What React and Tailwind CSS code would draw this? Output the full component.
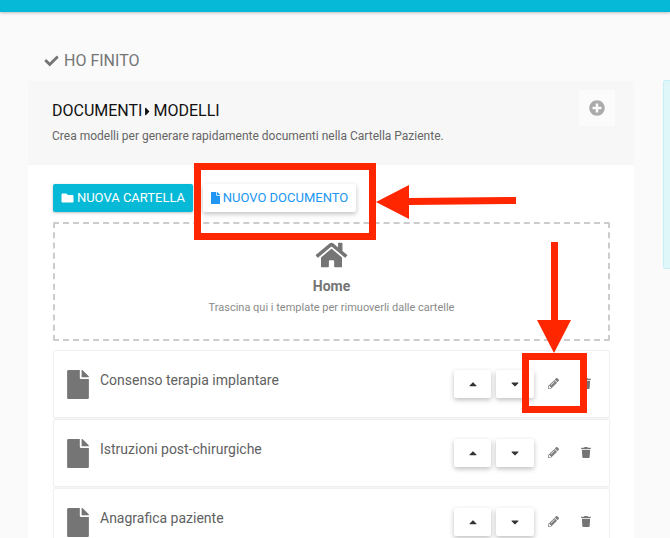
import React from "react";
import { FaCheck, FaFolder, FaFile, FaHome, FaPlusCircle, FaCaretUp, FaCaretDown, FaPencilAlt, FaTrash, FaCaretRight } from "react-icons/fa";

function RedBox({ className }) {
  return <div className={"absolute border-[7px] border-[#ff2600] " + className} />;
}

function Row({ title }) {
  return (
    <div className="h-[68px] shrink-0 flex items-start border border-[#f0f0f0] rounded-[2px] bg-white shadow-[0_1px_1px_rgba(0,0,0,0.05)] pl-[13px]">
      <FaFile className="mt-[19px] w-[22px] h-[29px] text-[#757575]" />
      <span className="ml-[11px] mt-[20px] text-[14px] leading-[18px] text-[#616161]">{title}</span>
      <div className="ml-auto flex items-start mt-[19px]">
        <button className="w-[37px] h-[28px] bg-white rounded-[2px] flex items-center justify-center shadow-[0_2px_5px_rgba(0,0,0,0.25)] text-[#333]">
          <FaCaretUp className="w-[12px] h-[12px]" />
        </button>
        <button className="ml-[5px] w-[38px] h-[28px] bg-white rounded-[2px] flex items-center justify-center shadow-[0_2px_5px_rgba(0,0,0,0.25)] text-[#333]">
          <FaCaretDown className="w-[12px] h-[12px]" />
        </button>
        <FaPencilAlt className="ml-[14px] mt-[8px] w-[11px] h-[11px] text-[#808080]" />
        <FaTrash className="ml-[22px] mt-[8px] w-[10px] h-[11px] text-[#757575]" />
        <span className="w-[18px]" />
      </div>
    </div>
  );
}

export default function App() {
  return (
    <div className="relative w-[670px] h-[538px] overflow-hidden bg-[#fafafa] font-['Roboto',sans-serif]">
      <div className="h-[12px] bg-[#06b9d6] shadow-[0_1px_3px_rgba(0,0,0,0.25)]" />
      <div className="flex items-center pl-[43px] mt-[39px] h-[20px] text-[#757575]">
        <FaCheck className="w-[17px] h-[14px]" />
        <span className="ml-[4px] text-[16px] leading-[20px]">HO FINITO</span>
      </div>
      <div className="flex mt-[10px] items-start">
        <div className="ml-[28px] w-[606px] shrink-0 h-[500px] bg-white">
          <div className="h-[84px] bg-[#f7f7f7] flex justify-between pl-[24px] pr-[19px]">
            <div>
              <div className="mt-[20px] flex items-center h-[20px] text-[16px] leading-[20px] text-[#111]">
                <span>DOCUMENTI</span>
                <FaCaretRight className="mx-[1px] w-[9px] h-[13px]" />
                <span>MODELLI</span>
              </div>
              <p className="mt-[7px] text-[12px] leading-[16px] text-[#666]">
                Crea modelli per generare rapidamente documenti nella Cartella Paziente.
              </p>
            </div>
            <div className="mt-[9px] w-[36px] h-[36px] bg-[#fbfbfb] flex items-center justify-center">
              <FaPlusCircle className="w-[16px] h-[16px] text-[#ababab]" />
            </div>
          </div>
          <div className="pl-[25px] pr-[24px]">
            <div className="mt-[19px] flex">
              <button className="w-[140px] h-[28px] bg-[#06b9d6] rounded-[2px] flex items-center justify-center text-white text-[13px] shadow-[0_1px_3px_rgba(0,0,0,0.25)]">
                <FaFolder className="w-[13px] h-[12px] mr-[3px]" />
                NUOVA CARTELLA
              </button>
              <button className="ml-[10px] w-[153px] h-[28px] bg-white rounded-[2px] flex items-center justify-center text-[#2196f3] text-[13px] shadow-[0_2px_5px_rgba(0,0,0,0.25)]">
                <FaFile className="w-[9px] h-[12px] mr-[3px]" />
                NUOVO DOCUMENTO
              </button>
            </div>
            <div className="mt-[10px] h-[119px] border-2 border-dashed border-[#cccccc] rounded-[2px] flex flex-col items-center">
              <FaHome className="mt-[17px] w-[33px] h-[28px] text-[#757575]" />
              <div className="mt-[7px] text-[14px] leading-[20px] font-bold text-[#757575]">Home</div>
              <div className="mt-[5px] text-[11px] leading-[14px] text-[#8a8a8a]">Trascina qui i template per rimuoverli dalle cartelle</div>
            </div>
            <div className="mt-[9px] flex flex-col gap-[1px]">
              <Row title="Consenso terapia implantare" />
              <Row title="Istruzioni post-chirurgiche" />
              <Row title="Anagrafica paziente" />
            </div>
          </div>
        </div>
        <div className="ml-[29px] w-[20px] h-[189px] shrink-0 -mt-[1px] bg-[#e0f7fa] border border-[#c8f0f7] rounded-[2px]" />
      </div>

      <RedBox className="left-[194px] top-[163px] w-[182px] h-[77px]" />
      <RedBox className="left-[522px] top-[353px] w-[65px] h-[60px]" />
      <svg className="absolute left-0 top-0 w-[670px] h-[538px] pointer-events-none" viewBox="0 0 670 538">
        <polygon points="376,202 409,185 409,198 516,197 516,204 409,205 409,219" fill="#ff2600" />
        <polygon points="551,242 558,242 558,320 571,320 554,353 537,320 551,320" fill="#ff2600" />
      </svg>
    </div>
  );
}
